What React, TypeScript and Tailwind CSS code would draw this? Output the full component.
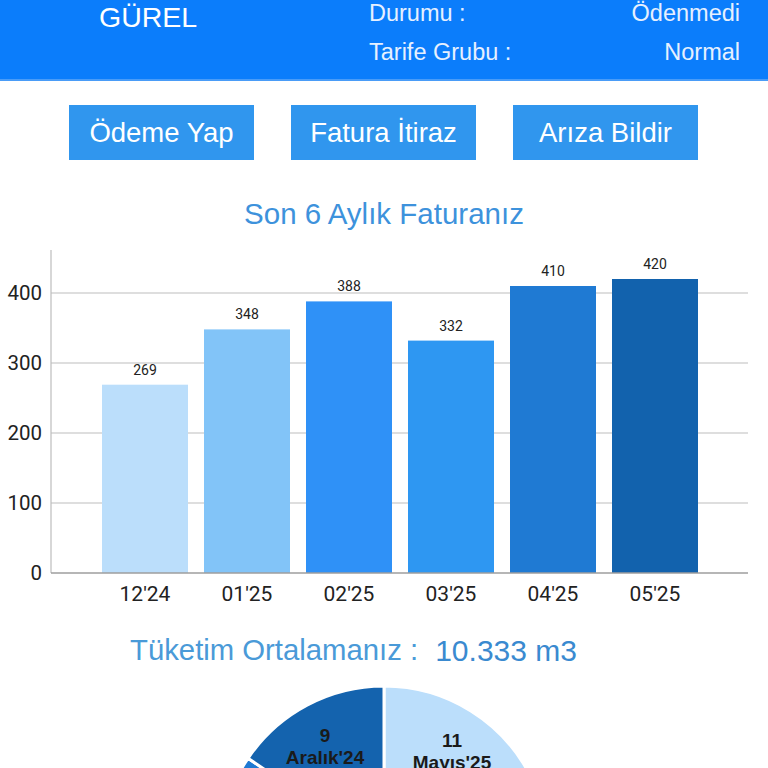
import React from "react";

const bars = [
  { label: "12'24", value: 269, color: "#bbdefb" },
  { label: "01'25", value: 348, color: "#82c4f8" },
  { label: "02'25", value: 388, color: "#2f91f7" },
  { label: "03'25", value: 332, color: "#2e97f2" },
  { label: "04'25", value: 410, color: "#1f7ad3" },
  { label: "05'25", value: 420, color: "#1262ad" },
];

const yv = (v: number) => 573 - 0.7 * v - 240;

function BarChart() {
  return (
    <svg width="768" height="380" viewBox="0 0 768 380" className="block">
      {[100, 200, 300, 400].map((g) => (
        <line key={g} x1={51} x2={748} y1={yv(g)} y2={yv(g)} stroke="#bdbdbd" strokeWidth={1.2} />
      ))}
      <line x1={51} x2={51} y1={10} y2={yv(0)} stroke="#bdbdbd" strokeWidth={1.2} />
      {bars.map((b, i) => {
        const x = 102 + 102 * i;
        const top = yv(b.value);
        return (
          <g key={b.label}>
            <rect x={x} y={top} width={86} height={yv(0) - top} fill={b.color} />
            <text x={x + 43} y={top - 10} textAnchor="middle" fontSize="14" fill="#222" fontFamily="Roboto, 'Liberation Sans', sans-serif">
              {b.value}
            </text>
            <text x={x + 43} y={361} textAnchor="middle" fontSize="21" fill="#222" fontFamily="Roboto, 'Liberation Sans', sans-serif">
              {b.label}
            </text>
          </g>
        );
      })}
      <line x1={51} x2={748} y1={yv(0)} y2={yv(0)} stroke="#9e9e9e" strokeWidth={1.5} />
      {[0, 100, 200, 300, 400].map((g) => (
        <text key={g} x={42} y={yv(g) + 7} textAnchor="end" fontSize="20.5" fill="#222" fontFamily="Roboto, 'Liberation Sans', sans-serif">
          {g}
        </text>
      ))}
    </svg>
  );
}

const slices = [
  { from: 0, to: 64, color: "#bbdefb", v: "11", l: "Mayıs'25", lx: 452, ly: 82 },
  { from: 64, to: 134, color: "#82c4f8", v: "12", l: "Nisan'25", lx: 0, ly: 0 },
  { from: 134, to: 190, color: "#2f91f7", v: "9", l: "Mart'25", lx: 0, ly: 0 },
  { from: 190, to: 250, color: "#2e97f2", v: "11", l: "Şubat'25", lx: 0, ly: 0 },
  { from: 250, to: 304, color: "#1f7ad3", v: "10", l: "Ocak'25", lx: 0, ly: 0 },
  { from: 304, to: 360, color: "#1463ae", v: "9", l: "Aralık'24", lx: 325, ly: 77 },
];

function Pie() {
  const cx = 384;
  const cy = 182;
  const R = 164;
  const pt = (a: number, r: number) => {
    const rad = (a * Math.PI) / 180;
    return [cx + r * Math.sin(rad), cy - r * Math.cos(rad)];
  };
  return (
    <svg width="768" height="360" viewBox="0 0 768 360" className="block">
      {slices.map((s) => {
        const [x1, y1] = pt(s.from, R);
        const [x2, y2] = pt(s.to, R);
        const large = s.to - s.from > 180 ? 1 : 0;
        return (
          <path
            key={s.l}
            d={`M ${cx} ${cy} L ${x1} ${y1} A ${R} ${R} 0 ${large} 1 ${x2} ${y2} Z`}
            fill={s.color}
            stroke="#ffffff"
            strokeWidth={3}
          />
        );
      })}
      {slices.map((s) => {
        const mid = (s.from + s.to) / 2;
        const [px, py] = pt(mid, 118);
        const x = s.lx || px;
        const y = s.ly || py;
        return (
          <text key={s.l + "t"} x={x} textAnchor="middle" fontSize="19" fontWeight="bold" fill="#1a1a1a" fontFamily="'Liberation Sans', Arial, sans-serif">
            <tspan x={x} y={y - 3}>{s.v}</tspan>
            <tspan x={x} y={y + 19}>{s.l}</tspan>
          </text>
        );
      })}
    </svg>
  );
}

export default function App() {
  return (
    <div className="w-[768px] h-[768px] overflow-hidden bg-white" style={{ fontFamily: "'Liberation Sans', Arial, sans-serif" }}>
      <div className="h-[81px] bg-[#0b7dfb] border-b-2 border-[#4a9cf7] flex text-white">
        <div className="w-[369px] pl-[99px]">
          <div className="text-[28.5px] leading-[34px]">GÜREL</div>
        </div>
        <div className="flex-1 pr-[28px] text-[23.5px] text-[#e6f0ff]">
          <div className="flex justify-between h-[26px] leading-[26px]">
            <span>Durumu :</span>
            <span>Ödenmedi</span>
          </div>
          <div className="flex justify-between h-[26px] leading-[26px] mt-[13px]">
            <span>Tarife Grubu :</span>
            <span>Normal</span>
          </div>
        </div>
      </div>

      <div className="flex pl-[69px] gap-[37px] mt-[24px]">
        {["Ödeme Yap", "Fatura İtiraz", "Arıza Bildir"].map((t) => (
          <button key={t} className="w-[185px] h-[55px] bg-[#3096ee] text-white text-[27.5px] flex items-center justify-center">
            {t}
          </button>
        ))}
      </div>

      <div className="mt-[37px] text-center text-[29.5px] leading-[34px] text-[#3d92dc]">Son 6 Aylık Faturanız</div>

      <div className="mt-[9px]">
        <BarChart />
      </div>

      <div className="mt-[12px] flex items-center h-[36px] pl-[130px]">
        <span className="text-[29.3px] text-[#4a9ad8]">Tüketim Ortalamanız :</span>
        <span className="ml-[17px] text-[30px] text-[#3a8ad0]">10.333 m3</span>
      </div>

      <Pie />
    </div>
  );
}
